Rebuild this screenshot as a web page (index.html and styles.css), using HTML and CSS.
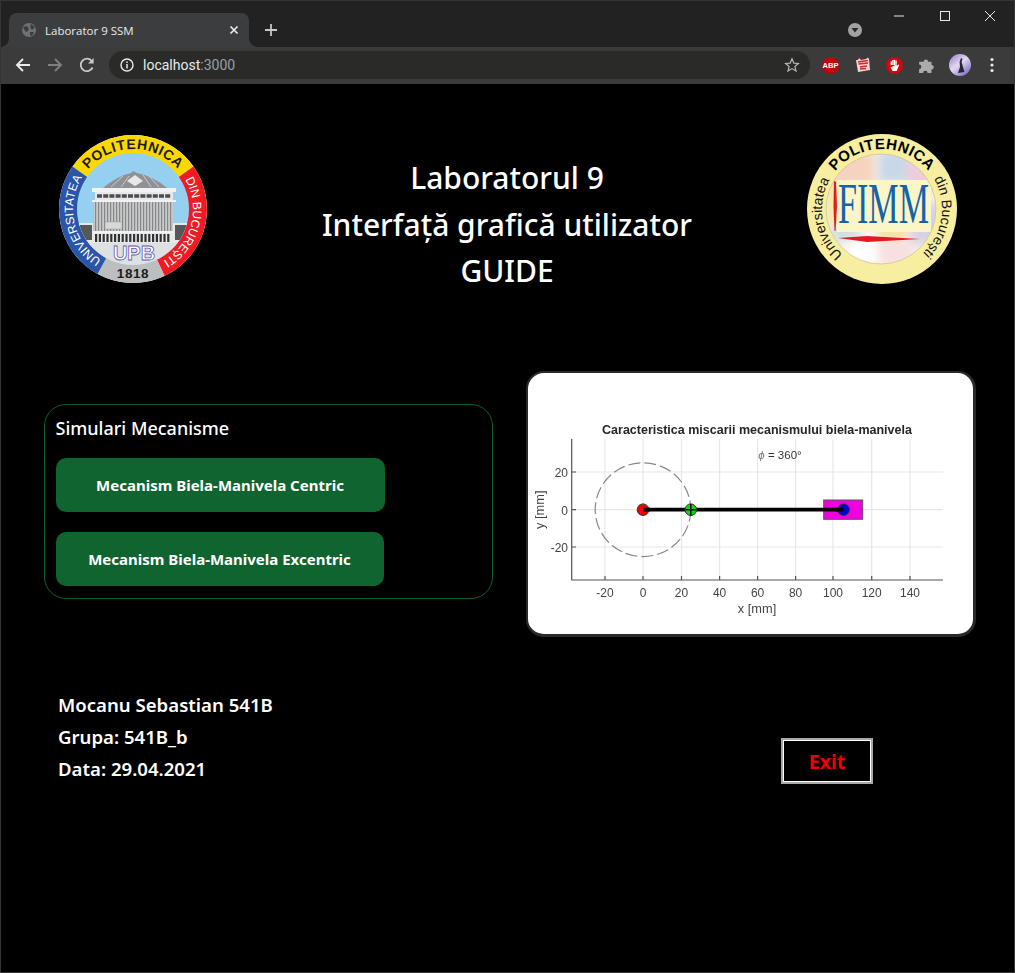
FILE: index.html
```html
<!DOCTYPE html>
<html lang="en">
<head>
    <meta charset="UTF-8">
    <meta name="viewport" content="width=device-width, initial-scale=1.0">
    <title>Laborator 9 SSM</title>
    <link rel="stylesheet" href="styles.css">
</head>
<body>
<div class="window">
    <div class="titlebar">
        <div class="tab">
            <svg class="favicon" width="14" height="14" viewBox="0 0 14 14"><circle cx="7" cy="7" r="7" fill="#6f7173"/><path d="M1 4 L5 3 L7 6 L5 9 L3 8 Z M9 1 L13 4 L10 7 L8 4 Z M8 9 L12 9 L10 13 L8 12 Z" fill="#3c3d3e"/></svg>
            <span class="tab-title">Laborator 9 SSM</span>
            <svg class="tab-close" width="10" height="10" viewBox="0 0 10 10"><path d="M1.5 1.5 L8.5 8.5 M8.5 1.5 L1.5 8.5" stroke="#e8eaed" stroke-width="1.7"/></svg>
        </div>
        <svg class="new-tab" width="14" height="14" viewBox="0 0 14 14"><path d="M7 1 V13 M1 7 H13" stroke="#c4c6c8" stroke-width="1.8"/></svg>
        <svg class="tab-search" width="16" height="16" viewBox="0 0 16 16"><circle cx="8" cy="8" r="7" fill="#a3a3a3"/><path d="M4.5 6 H11.5 L8 10.5 Z" fill="#2a2a2a"/></svg>
        <div class="win-controls">
            <svg width="12" height="12" viewBox="0 0 12 12"><path d="M1 6 H11" stroke="#e8e8e8" stroke-width="1"/></svg>
            <svg width="12" height="12" viewBox="0 0 12 12"><rect x="1.5" y="1.5" width="9" height="9" fill="none" stroke="#e8e8e8" stroke-width="1"/></svg>
            <svg width="12" height="12" viewBox="0 0 12 12"><path d="M1 1 L11 11 M11 1 L1 11" stroke="#e8e8e8" stroke-width="1"/></svg>
        </div>
    </div>
    <div class="toolbar">
        <svg class="nav-icon" width="16" height="16" viewBox="0 0 16 16"><path d="M15 8 H2 M8 2 L2 8 L8 14" fill="none" stroke="#e8eaed" stroke-width="1.9"/></svg>
        <svg class="nav-icon" width="16" height="16" viewBox="0 0 16 16"><path d="M1 8 H14 M8 2 L14 8 L8 14" fill="none" stroke="#7d7f81" stroke-width="1.9"/></svg>
        <svg class="nav-icon" width="16" height="16" viewBox="0 0 16 16"><path d="M13.6 10.5 A6.2 6.2 0 1 1 12.6 3.8" fill="none" stroke="#c8cacc" stroke-width="1.8"/><path d="M14.6 1 V6.6 H9 Z" fill="#c8cacc"/></svg>
        <div class="omnibox">
            <svg width="14" height="14" viewBox="0 0 14 14"><circle cx="7" cy="7" r="6" fill="none" stroke="#e8eaed" stroke-width="1.4"/><path d="M7 6 V10.5 M7 3.4 V5" stroke="#e8eaed" stroke-width="1.5"/></svg>
            <span class="url">localhost<span class="url-port">:3000</span></span>
            <svg class="star" width="16" height="16" viewBox="0 0 16 16"><path d="M8 1.8 L9.8 6.1 L14.4 6.5 L10.9 9.5 L12 14 L8 11.6 L4 14 L5.1 9.5 L1.6 6.5 L6.2 6.1 Z" fill="none" stroke="#b4b6b8" stroke-width="1.2"/></svg>
        </div>
        <div class="extensions">
            <svg width="17" height="17" viewBox="0 0 17 17"><path d="M5 0.5 H12 L16.5 5 V12 L12 16.5 H5 L0.5 12 V5 Z" fill="#c8000a"/><text x="8.5" y="11.2" class="abp-text">ABP</text></svg>
            <svg width="16" height="16" viewBox="0 0 16 16"><path d="M1 3 L3 3 L4 1 L6 3 L11 2 L13 0.5 L14 2 L15 13 L3 15 Z" fill="#f1d5d5"/><path d="M3 5 L13 3.5 M3.5 7 L13 6 M5 10 L12 9 M5 12 L11 11.5" stroke="#d6242c" stroke-width="1.4"/></svg>
            <svg width="17" height="17" viewBox="0 0 17 17"><path d="M5 0.5 H12 L16.5 5 V12 L12 16.5 H5 L0.5 12 V5 Z" fill="#d9040c"/><path d="M4.6 8 V4.6 H5.9 V8 M6.2 8 V3 H7.5 V8 M7.8 8 V2.8 H9.1 V8 M9.4 8 V3.6 H10.7 V9 L12.4 7.4 L13.2 8 L10.6 14 H6.6 L4.6 10.5 Z" fill="#fff"/></svg>
            <svg width="18" height="18" viewBox="0 0 16 16"><path d="M1 5 H5 A2 2 0 1 1 9 5 H12 V8 A2 2 0 1 1 12 12 V15 H8.5 A2 2 0 1 0 4.5 15 H1 V11.5 A2 2 0 1 0 1 7.5 Z" fill="#a9abad"/></svg>
            <svg width="22" height="22" viewBox="0 0 22 22">
                <defs><linearGradient id="avatar-bg" x1="0" y1="0" x2="0.8" y2="1"><stop offset="0" stop-color="#8d78c8"/><stop offset="0.5" stop-color="#e6d8f0"/><stop offset="1" stop-color="#7a6cc0"/></linearGradient></defs>
                <circle cx="11" cy="11" r="11" fill="url(#avatar-bg)"/>
                <path d="M12 4 L13.5 5 L12.6 8 L14 13 L15.5 18 L9 19 L11 13 L10.6 8 Z" fill="#2a2440"/>
            </svg>
            <svg width="4" height="16" viewBox="0 0 4 16"><circle cx="2" cy="2.5" r="1.6" fill="#e8eaed"/><circle cx="2" cy="8" r="1.6" fill="#e8eaed"/><circle cx="2" cy="13.5" r="1.6" fill="#e8eaed"/></svg>
        </div>
    </div>

    <div class="page">
        <header class="top">
            <svg class="logo" width="148" height="148" viewBox="0 0 148 148">
                <defs>
                    <path id="upb-top" d="M24.9 39.5 A60 60 0 0 1 123.1 39.5"/>
                    <path id="upb-left" d="M55.5 131.1 A60 60 0 0 1 32.3 30.9"/>
                    <path id="upb-right" d="M116.4 31.6 A60 60 0 0 1 89.5 132"/>
                    <pattern id="upb-stripes" width="3" height="4" patternUnits="userSpaceOnUse"><rect width="3" height="4" fill="#c9c9c9"/><rect width="1.2" height="4" fill="#85878a"/></pattern>
                    <clipPath id="upb-inner"><circle cx="74" cy="74" r="56"/></clipPath>
                </defs>
                <circle cx="74" cy="74" r="74" fill="#fff"/>
                <path d="M13.5 31.5 A74 74 0 0 1 134.5 31.5 L119 42.4 A55 55 0 0 0 29 42.4 Z" fill="#fdd800"/>
                <path d="M134.5 31.5 A74 74 0 0 1 105.6 140.9 L97.5 123.7 A55 55 0 0 0 119 42.4 Z" fill="#ed1c24"/>
                <path d="M105.6 140.9 A74 74 0 0 1 38.6 139 L47.7 122.3 A55 55 0 0 0 97.5 123.7 Z" fill="#bcbec0"/>
                <path d="M38.6 139 A74 74 0 0 1 13.5 31.5 L29 42.4 A55 55 0 0 0 47.7 122.3 Z" fill="#2a55a8"/>
                <g clip-path="url(#upb-inner)">
                    <rect x="10" y="10" width="128" height="128" fill="#96d0f0"/>
                    <rect x="10" y="108" width="128" height="33" fill="#dfe0e2"/>
                    <rect x="18" y="88" width="112" height="20" fill="#e8e8e8"/>
                    <path d="M21 90 H33 V105 H21 Z M116 90 H128 V105 H116 Z" fill="#55585b"/>
                </g>
                <path d="M44 53 Q58 41 72 38 L74 36 L78 38 Q94 41 108 53 Z" fill="#8f9194"/>
                <path d="M68 46 L76 40 L84 46 L76 51 Z" fill="#e8e8e8"/>
                <path d="M52 52 L64 41 M62 52 L70 41 M92 52 L84 40 M100 52 L90 41" stroke="#d8d8d8" stroke-width="0.8"/>
                <rect x="33" y="53" width="84" height="4" fill="#f2f2f2"/>
                <rect x="36" y="57" width="78" height="8" fill="#e8e8e8"/>
                <path d="M38 61 H112" stroke="#4a4c4f" stroke-width="3.6" stroke-dasharray="5 1.2"/>
                <rect x="33" y="65" width="84" height="2" fill="#f2f2f2"/>
                <rect x="34" y="67" width="80" height="29" fill="url(#upb-stripes)"/>
                <rect x="46" y="87" width="17" height="7" fill="#d8d8d8" stroke="#9a9a9a" stroke-width="0.5"/>
                <rect x="34" y="96" width="80" height="2" fill="#f2f2f2"/>
                <path d="M36 103 H112" stroke="#303234" stroke-width="8" stroke-dasharray="2.2 1.6"/>
                <text x="75" y="125" class="upb-mark">UPB</text>
                <text x="74" y="143" class="upb-year">1818</text>
                <text class="upb-top"><textPath href="#upb-top" startOffset="50%">POLITEHNICA</textPath></text>
                <text class="upb-ring"><textPath href="#upb-left" startOffset="50%">UNIVERSITATEA</textPath></text>
                <text class="upb-ring"><textPath href="#upb-right" startOffset="50%">DIN BUCUREȘTI</textPath></text>
            </svg>
            <h1 class="title">Laboratorul 9<br>Interfață grafică utilizator<br>GUIDE</h1>
            <svg class="logo" width="150" height="150" viewBox="0 0 150 150">
                <defs>
                    <path id="fimm-ring-top" d="M18.6 54.5 A60 60 0 0 1 131.4 54.5"/>
                    <path id="fimm-ring-left" d="M49.6 129.4 A60 60 0 0 1 32.6 32.6"/>
                    <path id="fimm-ring-right" d="M121 36.4 A60 60 0 0 1 107.7 125.3"/>
                    <clipPath id="fimm-inner"><circle cx="74" cy="75" r="55"/></clipPath>
                    <filter id="soft"><feGaussianBlur stdDeviation="4"/></filter>
                </defs>
                <circle cx="75" cy="75" r="75" fill="#f8ee9f"/>
                <g clip-path="url(#fimm-inner)">
                    <rect width="150" height="150" fill="#f6eee6"/>
                    <g filter="url(#soft)">
                        <rect x="25" y="20" width="42" height="30" fill="#f5d3c0"/>
                        <rect x="72" y="18" width="30" height="30" fill="#c8d8e8"/>
                        <rect x="100" y="25" width="30" height="30" fill="#eeccdd"/>
                        <rect x="20" y="50" width="15" height="40" fill="#f4e8a0"/>
                        <rect x="104" y="70" width="30" height="40" fill="#d8d0e8"/>
                        <rect x="40" y="100" width="30" height="30" fill="#ffffff"/>
                        <rect x="72" y="104" width="32" height="26" fill="#f8e0e0"/>
                        <rect x="25" y="92" width="28" height="14" fill="#c8e0e0"/>
                        <rect x="70" y="96" width="30" height="8" fill="#f5e080"/>
                    </g>
                    <rect x="30" y="46" width="94" height="52" fill="#fbf6c8"/>
                </g>
                <circle cx="74" cy="75" r="55" fill="none" stroke="#c9c08a" stroke-width="0.7"/>
                <text x="31" y="89" textLength="91" lengthAdjust="spacingAndGlyphs" class="fimm-mark">FIMM</text>
                <path d="M27 47 L29 48 L30 72 L28.5 97 L27.5 97 L26.5 72 Z" fill="#e01b24"/>
                <path d="M31 104 L60 102 L113 105 L60 108 Z" fill="#e01b24"/>
                <text class="fimm-top"><textPath href="#fimm-ring-top" startOffset="50%">POLITEHNICA</textPath></text>
                <text class="fimm-ring"><textPath href="#fimm-ring-left" startOffset="50%">Universitatea</textPath></text>
                <text class="fimm-ring"><textPath href="#fimm-ring-right" startOffset="50%">din București</textPath></text>
            </svg>
        </header>

        <section class="middle">
            <div class="panel">
                <h2 class="panel-title">Simulari Mecanisme</h2>
                <button class="sim-btn">Mecanism Biela-Manivela Centric</button>
                <button class="sim-btn sim-btn-alt">Mecanism Biela-Manivela Excentric</button>
            </div>
            <div class="chart-card">
                <svg class="chart" width="445" height="261" viewBox="528 373 445 261">
                    <text x="757" y="434" class="chart-title">Caracteristica miscarii mecanismului biela-manivela</text>
                    <g class="grid">
                        <path d="M605 439 V580 M643 439 V580 M681.5 439 V580 M719.6 439 V580 M757.6 439 V580 M795.6 439 V580 M833 439 V580 M871.7 439 V580 M910 439 V580"/>
                        <path d="M572 472 H943 M572 509.7 H943 M572 547 H943"/>
                    </g>
                    <g class="axis">
                        <path d="M571.7 439 V580 H943"/>
                        <path d="M605 580 V576 M643 580 V576 M681.5 580 V576 M719.6 580 V576 M757.6 580 V576 M795.6 580 V576 M833 580 V576 M871.7 580 V576 M910 580 V576"/>
                        <path d="M572 472 H576 M572 509.7 H576 M572 547 H576"/>
                    </g>
                    <g class="tick-x">
                        <text x="605" y="597">-20</text><text x="643" y="597">0</text><text x="681.5" y="597">20</text><text x="719.6" y="597">40</text><text x="757.6" y="597">60</text><text x="795.6" y="597">80</text><text x="833" y="597">100</text><text x="871.7" y="597">120</text><text x="910" y="597">140</text>
                    </g>
                    <g class="tick-y">
                        <text x="568" y="477">20</text><text x="568" y="515">0</text><text x="568" y="552">-20</text>
                    </g>
                    <text x="757" y="613" class="axis-label">x [mm]</text>
                    <text transform="translate(544 509.7) rotate(-90)" class="axis-label">y [mm]</text>
                    <text x="780" y="459" class="phi"><tspan class="phi-sym">ϕ</tspan> = 360°</text>
                    <ellipse cx="643" cy="509.7" rx="47.8" ry="46.9" class="crank-path"/>
                    <rect x="823.7" y="500" width="39" height="19.3" class="slider"/>
                    <path d="M643 509.7 H843.6" class="rod"/>
                    <circle cx="643" cy="509.7" r="5.8" fill="#f00000" stroke="#333"/>
                    <circle cx="690.8" cy="509.7" r="5.8" fill="#00e000" stroke="#333"/>
                    <path d="M690.8 504 V515.4 M685.5 509.7 H696" stroke="#111" stroke-width="1.6"/>
                    <circle cx="843.6" cy="509.7" r="5.8" fill="#0000e0" stroke="#333"/>
                    <path d="M643 509.7 H650 M836 509.7 H843.6" stroke="#000" stroke-width="3.8"/>
                </svg>
            </div>
        </section>

        <section class="bottom">
            <div class="info">
                <p>Mocanu Sebastian 541B</p>
                <p>Grupa: 541B_b</p>
                <p>Data: 29.04.2021</p>
            </div>
            <button class="exit-btn">Exit</button>
        </section>
    </div>
</div>
</body>
</html>
```

FILE: styles.css
```css
html, body {
    margin: 0;
    padding: 0;
    background: black;
}
.window {
    width: 1015px;
    height: 973px;
    box-sizing: border-box;
    border: 1px solid #353535;
    display: flex;
    flex-direction: column;
    overflow: hidden;
    font-family: "Noto Sans", "Open Sans", sans-serif;
    color: white;
}

/* browser chrome */
.titlebar {
    height: 46px;
    flex: none;
    background: #222222;
    display: flex;
    align-items: flex-end;
    position: relative;
}
.tab {
    width: 240px;
    height: 34px;
    margin-left: 8px;
    background: #3c3d3e;
    border-radius: 8px 8px 0 0;
    display: flex;
    align-items: center;
    padding: 0 10px 0 13px;
    box-sizing: border-box;
    position: relative;
}
.tab::before, .tab::after {
    content: "";
    position: absolute;
    bottom: 0;
    width: 8px;
    height: 8px;
}
.tab::before {
    left: -8px;
    background: radial-gradient(circle at 0 0, #222222 7.5px, #3c3d3e 8px);
}
.tab::after {
    right: -8px;
    background: radial-gradient(circle at 100% 0, #222222 7.5px, #3c3d3e 8px);
}
.favicon {
    flex: none;
}
.tab-title {
    margin-left: 9px;
    font-family: "Open Sans", sans-serif;
    font-size: 11.5px;
    color: #e8eaed;
    flex: 1;
}
.new-tab {
    margin: 0 0 10px 15px;
}
.tab-search {
    position: absolute;
    left: 846px;
    top: 21px;
}
.win-controls {
    position: absolute;
    top: 9px;
    right: 18px;
    display: flex;
    gap: 33.5px;
}
.toolbar {
    height: 37px;
    flex: none;
    background: #3b3b3b;
    box-sizing: border-box;
    padding: 0 0 1px 14px;
    display: flex;
    align-items: center;
}
.nav-icon {
    flex: none;
    margin-right: 16px;
}
.omnibox {
    width: 701px;
    height: 28px;
    margin-left: -2px;
    flex: none;
    border-radius: 14px;
    background: #2a2b28;
    display: flex;
    align-items: center;
    padding: 0 10px 0 11px;
    box-sizing: border-box;
}
.url {
    margin-left: 9px;
    font-family: Roboto, sans-serif;
    font-size: 14px;
    color: #e8eaed;
    flex: 1;
}
.url-port {
    color: #9aa0a6;
}
.extensions {
    margin-left: 4px;
    display: grid;
    grid-template-columns: repeat(6, 32.4px);
    justify-items: center;
    align-items: center;
}
.abp-text {
    font-family: "Liberation Sans", sans-serif;
    font-size: 7.6px;
    font-weight: bold;
    fill: white;
    text-anchor: middle;
}

/* page */
.page {
    flex: 1;
    background: black;
}
.top {
    margin-top: 50px;
    padding: 0 57px 0 58px;
    height: 150px;
    display: flex;
    align-items: center;
    justify-content: space-between;
}
.logo {
    flex: none;
}
.title {
    flex: 1;
    margin: 32px 0 0;
    text-align: center;
    font-size: 30px;
    font-weight: 500;
    line-height: 46.5px;
}
.middle {
    margin-top: 87px;
    display: flex;
    align-items: flex-start;
}
.panel {
    margin: 33px 0 0 43px;
    width: 449px;
    height: 195px;
    box-sizing: border-box;
    border: 1.5px solid #0f5f2c;
    border-radius: 22px;
    padding: 9px 0 0 10.5px;
}
.panel-title {
    margin: 0 0 16px;
    font-size: 18px;
    font-weight: 500;
    line-height: 28px;
}
.sim-btn {
    display: block;
    width: 329px;
    height: 54px;
    border: none;
    border-radius: 10px;
    background: #0f6430;
    color: white;
    font-family: inherit;
    font-size: 15px;
    font-weight: 700;
    margin-bottom: 20px;
}
.sim-btn-alt {
    width: 328px;
}
.chart-card {
    margin-left: 33px;
    width: 450px;
    height: 266px;
    box-sizing: border-box;
    background: white;
    border: 3px solid #2a2a2a;
    border-left-width: 2px;
    border-top-width: 2px;
    border-radius: 18px;
    overflow: hidden;
}
.chart {
    display: block;
    font-family: "Liberation Sans", sans-serif;
    filter: blur(0.4px);
}
.chart-title {
    font-size: 12.5px;
    font-weight: bold;
    fill: #262626;
    text-anchor: middle;
}
.grid path {
    fill: none;
    stroke: #e8e8e8;
    stroke-width: 1.2;
}
.axis path {
    fill: none;
    stroke: #555;
    stroke-width: 1.2;
}
.tick-x text {
    font-size: 12px;
    fill: #444;
    text-anchor: middle;
}
.tick-y text {
    font-size: 12px;
    fill: #444;
    text-anchor: end;
}
.axis-label {
    font-size: 12.8px;
    fill: #444;
    text-anchor: middle;
}
.phi {
    font-size: 11.5px;
    fill: #333;
    text-anchor: middle;
}
.phi-sym {
    font-style: italic;
    fill: #777;
}
.crank-path {
    fill: none;
    stroke: #888;
    stroke-width: 1.2;
    stroke-dasharray: 12 4;
}
.slider {
    fill: #f000e0;
    stroke: #555;
    stroke-width: 1;
}
.rod {
    stroke: black;
    stroke-width: 3.8;
}
.bottom {
    margin-top: 51px;
    display: flex;
    justify-content: space-between;
    align-items: flex-start;
    padding: 0 141px 0 57px;
}
.info {
    padding-top: 1px;
}
.info p {
    margin: 0;
    font-size: 18.6px;
    font-weight: 600;
    line-height: 32px;
}
.exit-btn {
    margin-top: 50px;
    width: 92px;
    height: 46px;
    box-sizing: border-box;
    background: black;
    border: 2px solid #a8a8a8;
    box-shadow: inset 0 0 0 1px white;
    color: #f00000;
    font-family: inherit;
    font-size: 19.5px;
    font-weight: 700;
    padding: 1px 0 0;
}

/* logo text */
.upb-top {
    font-family: "Liberation Sans", sans-serif;
    font-size: 14px;
    font-weight: bold;
    letter-spacing: 0.6px;
    fill: #1c1c1c;
    text-anchor: middle;
}
.upb-ring {
    font-family: "Liberation Sans", sans-serif;
    font-size: 12px;
    fill: white;
    text-anchor: middle;
}
.upb-mark {
    font-family: "Liberation Sans", sans-serif;
    font-size: 20px;
    font-weight: bold;
    fill: white;
    stroke: #5a5fb0;
    stroke-width: 0.8;
    text-anchor: middle;
}
.upb-year {
    font-family: "Liberation Sans", sans-serif;
    font-size: 13.5px;
    font-weight: bold;
    letter-spacing: 0.6px;
    fill: #1c1c1c;
    text-anchor: middle;
}
.fimm-mark {
    font-family: "Liberation Serif", serif;
    font-size: 56px;
    fill: #1762a8;
}
.fimm-top {
    font-family: "Liberation Sans", sans-serif;
    font-size: 15px;
    font-weight: bold;
    letter-spacing: 0.5px;
    fill: black;
    text-anchor: middle;
}
.fimm-ring {
    font-family: "Liberation Sans", sans-serif;
    font-size: 14px;
    fill: #111;
    text-anchor: middle;
}
```
